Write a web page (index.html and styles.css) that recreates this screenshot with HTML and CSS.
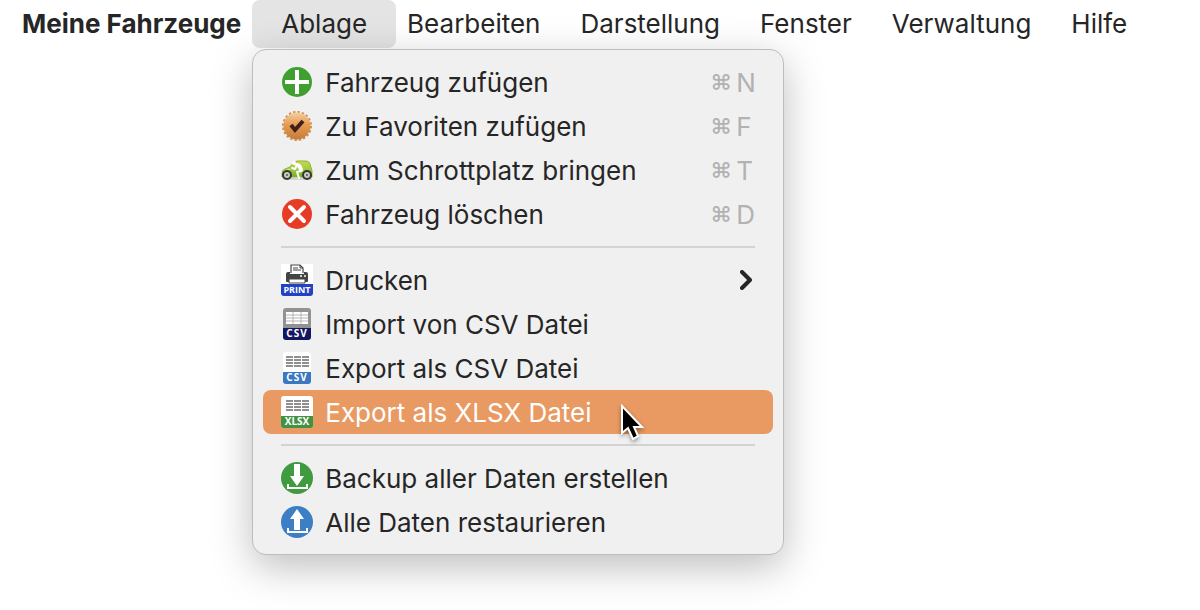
FILE: index.html
```
<!DOCTYPE html>
<html lang="de">
<head>
    <meta charset="UTF-8">
    <title>Meine Fahrzeuge</title>
    <link rel="stylesheet" href="styles.css">
</head>
<body>
    <nav class="menubar">
        <ul class="bar">
            <li><button type="button" class="title app">Meine Fahrzeuge</button></li>
            <li class="open">
                <button type="button" class="title current">Ablage</button>
                <div class="dropdown">
                    <ul>
                        <li><button type="button" class="item">
                            <svg class="icon" viewBox="0 0 32 32">
                                <circle cx="16" cy="16" r="15" fill="#3fa02f"/>
                                <path d="M16 4v24M4 16h24" stroke="#fff" stroke-width="4"/>
                            </svg>
                            <span class="label">Fahrzeug zufügen</span>
                            <span class="key"><span class="cmd">⌘</span><span>N</span></span>
                        </button></li>
                        <li><button type="button" class="item">
                            <svg class="icon" viewBox="0 0 32 32">
                                <defs>
                                    <linearGradient id="seal" x1="0" y1="0" x2="0" y2="1">
                                        <stop offset="0" stop-color="#f3cfa4"/>
                                        <stop offset=".45" stop-color="#e99b50"/>
                                        <stop offset="1" stop-color="#c27c3a"/>
                                    </linearGradient>
                                </defs>
                                <circle cx="16" cy="16" r="14" fill="none" stroke="#cf8c4c" stroke-width="2" stroke-dasharray="2.400 2"/>
                                <circle cx="16" cy="16" r="13.500" fill="url(#seal)"/>
                                <path d="M10 15l4 5 8-9" fill="none" stroke="#40201c" stroke-width="4"/>
                            </svg>
                            <span class="label">Zu Favoriten zufügen</span>
                            <span class="key"><span class="cmd">⌘</span><span>F</span></span>
                        </button></li>
                        <li><button type="button" class="item">
                            <svg class="icon" viewBox="0 0 32 32">
                                <defs>
                                    <linearGradient id="car" x1="0" y1="0" x2="0" y2="1">
                                        <stop offset="0" stop-color="#c3d94a"/>
                                        <stop offset=".5" stop-color="#a3cb45"/>
                                        <stop offset="1" stop-color="#74ad2a"/>
                                    </linearGradient>
                                </defs>
                                <path d="M2 25h29" stroke="#b9bbb5" stroke-width="1"/>
                                <path d="M1 23v-4q0-3 3-4l5-2q3-5 7-6h9q3 0 4 3l2 7v6z" fill="url(#car)" stroke="#8fb336" stroke-width="1"/>
                                <path d="M3 17l6-2" stroke="#e7f1a4" stroke-width="1"/>
                                <g fill="none" stroke="#fff" stroke-linecap="round" stroke-linejoin="round">
                                    <path d="M16 11q3 0 4 5" stroke-width="4"/>
                                    <path d="M16 11l-2 4-3-1M20 17l-4 1 2 6" stroke-width="2"/>
                                </g>
                                <circle cx="13" cy="9" r="2" fill="#fff"/>
                                <g fill="#c5cbc0" stroke="#34372f" stroke-width="2">
                                    <circle cx="6" cy="21" r="4"/><circle cx="26" cy="21" r="4"/>
                                </g>
                                <circle cx="6" cy="21" r="1" fill="#555"/><circle cx="26" cy="21" r="1" fill="#555"/>
                            </svg>
                            <span class="label">Zum Schrottplatz bringen</span>
                            <span class="key"><span class="cmd">⌘</span><span>T</span></span>
                        </button></li>
                        <li><button type="button" class="item">
                            <svg class="icon" viewBox="0 0 32 32">
                                <circle cx="16" cy="16" r="15" fill="#e63b25"/>
                                <path d="M9 9l14 14M23 9l-14 14" stroke="#fff" stroke-width="4" stroke-linecap="round"/>
                            </svg>
                            <span class="label">Fahrzeug löschen</span>
                            <span class="key"><span class="cmd">⌘</span><span>D</span></span>
                        </button></li>
                    </ul>
                    <hr>
                    <ul>
                        <li><button type="button" class="item">
                            <svg class="icon" viewBox="0 0 32 32">
                                <path d="M0 0h32v21H0z" fill="#fff"/>
                                <path d="M0 20h32v9a3 3 0 0 1-3 3H3a3 3 0 0 1-3-3z" fill="#2242c4"/>
                                <path d="M10 9V1h9l3 3v5" fill="#fff" stroke="#444" stroke-width="1.2"/>
                                <path d="M12 4h5M12 6h8M19 1v3h3" fill="none" stroke="#444"/>
                                <path d="M7 8h2v2h14V8h2a2 2 0 0 1 2 2v7a1 1 0 0 1-1 1h-2v-3H8v3H6a1 1 0 0 1-1-1v-7a2 2 0 0 1 2-2z" fill="#444"/>
                                <path d="M8 15h16v4H8z" fill="#fff" stroke="#444"/>
                                <circle cx="20" cy="12" r="1" fill="#fff"/><circle cx="24" cy="12" r="1" fill="#fff"/>
                                <text x="16" y="29" class="tag small">PRINT</text>
                            </svg>
                            <span class="label">Drucken</span>
                            <svg class="arrow" viewBox="0 0 12 20"><path d="M2 2l8 8-8 8"/></svg>
                        </button></li>
                        <li><button type="button" class="item">
                            <svg class="icon" viewBox="0 0 32 32">
                                <path d="M2 21V3a3 3 0 0 1 3-3h22a3 3 0 0 1 3 3v18z" fill="#929292"/>
                                <path d="M2 20h28v9a3 3 0 0 1-3 3H5a3 3 0 0 1-3-3z" fill="#131761"/>
                                <path d="M5 4h22v12H5z" fill="#fff"/>
                                <path d="M5 7h22M5 10h22M5 13h22M12 4v12M20 4v12" stroke="#b4b4b4"/>
                                <text x="16" y="29" class="tag wide">CSV</text>
                            </svg>
                            <span class="label">Import von CSV Datei</span>
                        </button></li>
                        <li><button type="button" class="item">
                            <svg class="icon" viewBox="0 0 32 32">
                                <path d="M2 21V3a3 3 0 0 1 3-3h22a3 3 0 0 1 3 3v18z" fill="#fff"/>
                                <path d="M2 20h28v9a3 3 0 0 1-3 3H5a3 3 0 0 1-3-3z" fill="#3a79bf"/>
                                <path d="M5 5h23M5 8h23M5 11h23M5 14h23" stroke="#8f8f8f" stroke-width="2"/>
                                <path d="M12.500 4v11M20.500 4v11" stroke="#fff"/>
                                <text x="16" y="29" class="tag wide">CSV</text>
                            </svg>
                            <span class="label">Export als CSV Datei</span>
                        </button></li>
                        <li><button type="button" class="item active">
                            <svg class="icon" viewBox="0 0 32 32">
                                <path d="M0 21V3a3 3 0 0 1 3-3h26a3 3 0 0 1 3 3v18z" fill="#fff"/>
                                <path d="M0 20h32v9a3 3 0 0 1-3 3H3a3 3 0 0 1-3-3z" fill="#419343"/>
                                <path d="M5 5h23M5 8h23M5 11h23M5 14h23" stroke="#8f8f8f" stroke-width="2"/>
                                <path d="M12.500 4v11M20.500 4v11" stroke="#fff"/>
                                <text x="16" y="29" class="tag">XLSX</text>
                            </svg>
                            <span class="label">Export als XLSX Datei</span>
                            <svg class="pointer" viewBox="0 0 26 38">
                                <path d="M1 2v27l6-5 5 11 5-3-4-9h8z" fill="#000" stroke="#fff" stroke-width="2"/>
                            </svg>
                        </button></li>
                    </ul>
                    <hr>
                    <ul>
                        <li><button type="button" class="item">
                            <svg class="icon" viewBox="0 0 32 32">
                                <circle cx="16" cy="16" r="16" fill="#3f9a40"/>
                                <path d="M13 2h6v12h4l-7 10-7-10h4z" fill="#fff"/>
                                <path d="M7 22v4h19v-4" fill="none" stroke="#fff" stroke-width="2"/>
                            </svg>
                            <span class="label">Backup aller Daten erstellen</span>
                        </button></li>
                        <li><button type="button" class="item">
                            <svg class="icon" viewBox="0 0 32 32">
                                <circle cx="16" cy="16" r="16" fill="#3c7fc5"/>
                                <path d="M13 24h6V13h4L16 3 9 13h4z" fill="#fff"/>
                                <path d="M7 22v4h19v-4" fill="none" stroke="#fff" stroke-width="2"/>
                            </svg>
                            <span class="label">Alle Daten restaurieren</span>
                        </button></li>
                    </ul>
                </div>
            </li>
            <li><button type="button" class="title">Bearbeiten</button></li>
            <li><button type="button" class="title">Darstellung</button></li>
            <li><button type="button" class="title">Fenster</button></li>
            <li><button type="button" class="title">Verwaltung</button></li>
            <li><button type="button" class="title">Hilfe</button></li>
        </ul>
    </nav>
</body>
</html>
```
FILE: styles.css
```
* {
    margin: 0;
    padding: 0;
    box-sizing: border-box;
}
body {
    min-height: 100vh;
    background: #fff;
    color: #262626;
    font-family: Inter, "Liberation Sans", sans-serif;
    font-size: 26px;
}
ul {
    list-style: none;
}
button {
    border: 0;
    background: none;
    color: inherit;
    font: inherit;
    white-space: nowrap;
}
.bar {
    display: flex;
}
.title {
    height: 48px;
    padding: 0 29px;
    margin-right: -18px;
    line-height: 46px;
}
.app {
    padding-left: 22px;
    font-weight: bold;
}
.current {
    border-radius: 8px;
    background: #e4e4e4;
}
.open {
    position: relative;
}
/* Aufgeklapptes Menü */
.dropdown {
    position: absolute;
    z-index: 1;
    top: 49px;
    left: 0;
    width: 532px;
    padding: 10px;
    border: 1px solid #bdbdbd;
    border-radius: 14px;
    background: #f0f0f0;
    box-shadow: 0 12px 40px rgba(0, 0, 0, .26);
}
.dropdown hr {
    height: 2px;
    margin: 10px 18px;
    border: 0;
    background: #d3d3d3;
}
.item {
    position: relative;
    display: flex;
    align-items: center;
    width: 100%;
    height: 44px;
    padding: 0 18px;
    border-radius: 8px;
    text-align: left;
}
.active {
    background: #e99a63;
    color: #fff;
}
.icon {
    width: 32px;
    height: 32px;
    margin-right: 12px;
}
.label {
    flex: 1;
}
.key {
    display: grid;
    grid-template-columns: 26px 19px;
    align-items: center;
    color: #b2b2b2;
}
.cmd {
    font-size: 22px;
    font-weight: 500;
}
.arrow {
    width: 12px;
    height: 20px;
    margin-right: 3px;
    fill: none;
    stroke: #262626;
    stroke-width: 4;
    stroke-linecap: round;
    stroke-linejoin: round;
}
.tag {
    fill: #fff;
    font: bold 10px "Open Sans", sans-serif;
    text-anchor: middle;
}
.small {
    font-size: 9px;
}
.wide {
    letter-spacing: 1px;
}
.pointer {
    position: absolute;
    top: 14px;
    left: 358px;
    width: 26px;
    height: 38px;
    filter: drop-shadow(0 2px 2px rgba(0, 0, 0, .4));
}
```
